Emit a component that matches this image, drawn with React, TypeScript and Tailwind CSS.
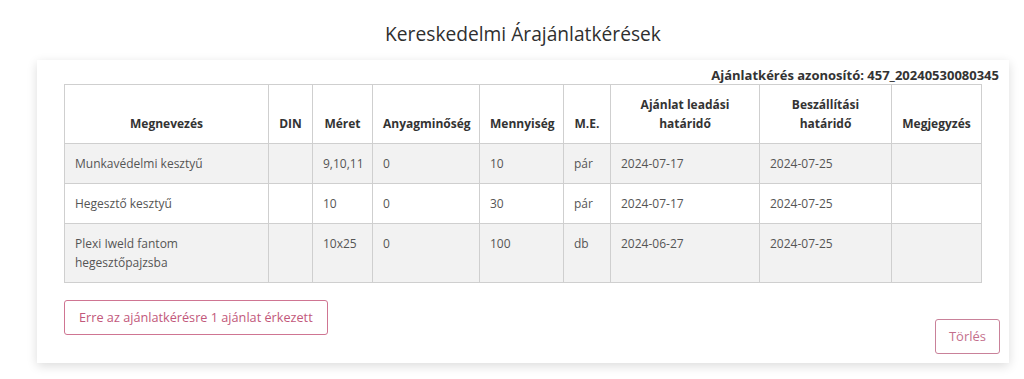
const columns = [
  { label: ['Megnevezés'], w: 'w-[204px]' },
  { label: ['DIN'], w: 'w-[44px]' },
  { label: ['Méret'], w: 'w-[60px]' },
  { label: ['Anyagminőség'], w: 'w-[107px]' },
  { label: ['Mennyiség'], w: 'w-[84px]' },
  { label: ['M.E.'], w: 'w-[47px]' },
  { label: ['Ajánlat leadási', 'határidő'], w: 'w-[149px]' },
  { label: ['Beszállítási', 'határidő'], w: 'w-[132px]' },
  { label: ['Megjegyzés'], w: 'w-[90px]' },
];

const rows = [
  ['Munkavédelmi kesztyű', '', '9,10,11', '0', '10', 'pár', '2024-07-17', '2024-07-25', ''],
  ['Hegesztő kesztyű', '', '10', '0', '30', 'pár', '2024-07-17', '2024-07-25', ''],
  ['Plexi Iweld fantom hegesztőpajzsba', '', '10x25', '0', '100', 'db', '2024-06-27', '2024-07-25', ''],
];

export default function App() {
  return (
    <div
      className="w-[1024px] h-[379px] bg-white text-[#555]"
      style={{ fontFamily: '"Open Sans", "Noto Sans", sans-serif' }}
    >
      <div className="ml-[37px] w-[972px] pt-[21px]">
        <h1 className="text-center text-[19.2px] leading-[26px] text-[#2f2f2f]">
          Kereskedelmi Árajánlatkérések
        </h1>

        <div className="mt-[13px] bg-white shadow-[0_3px_10px_rgba(0,0,0,0.14)] pt-[6px] pb-[9px]">
          <div className="flex justify-end pr-[10px] text-[13px] leading-[18px] font-bold text-[#333]">
            Ajánlatkérés azonosító: 457_20240530080345
          </div>

          <div className="px-[27px] pr-[28px]">
            <table className="w-[917px] border-collapse table-fixed text-[12px] leading-[19px]">
              <thead>
                <tr>
                  {columns.map((c) => (
                    <th
                      key={c.label.join(' ')}
                      className={`${c.w} border border-[#cfcfcf] px-[10px] py-[10px] align-bottom text-center font-bold text-[#333]`}
                    >
                      {c.label.map((l) => (
                        <div key={l}>{l}</div>
                      ))}
                    </th>
                  ))}
                </tr>
              </thead>
              <tbody>
                {rows.map((r, i) => (
                  <tr key={i} className={i % 2 === 0 ? 'bg-[#f2f2f2]' : 'bg-white'}>
                    {r.map((cell, j) => (
                      <td
                        key={j}
                        className="border border-[#cfcfcf] px-[10px] py-[10px] align-top"
                      >
                        {cell}
                      </td>
                    ))}
                  </tr>
                ))}
              </tbody>
            </table>
          </div>

          <div className="flex items-start justify-between pl-[27px] pr-[9px] mt-[17px]">
            <button className="h-[35px] px-[14px] rounded-[3px] border border-[#cf7592] text-[12.7px] text-[#c2587b] bg-white">
              Erre az ajánlatkérésre 1 ajánlat érkezett
            </button>
            <button className="mt-[19px] h-[35px] px-[13px] rounded-[3px] border border-[#c98199] text-[13px] text-[#c46f8c] bg-white">
              Törlés
            </button>
          </div>
        </div>
      </div>
    </div>
  );
}
